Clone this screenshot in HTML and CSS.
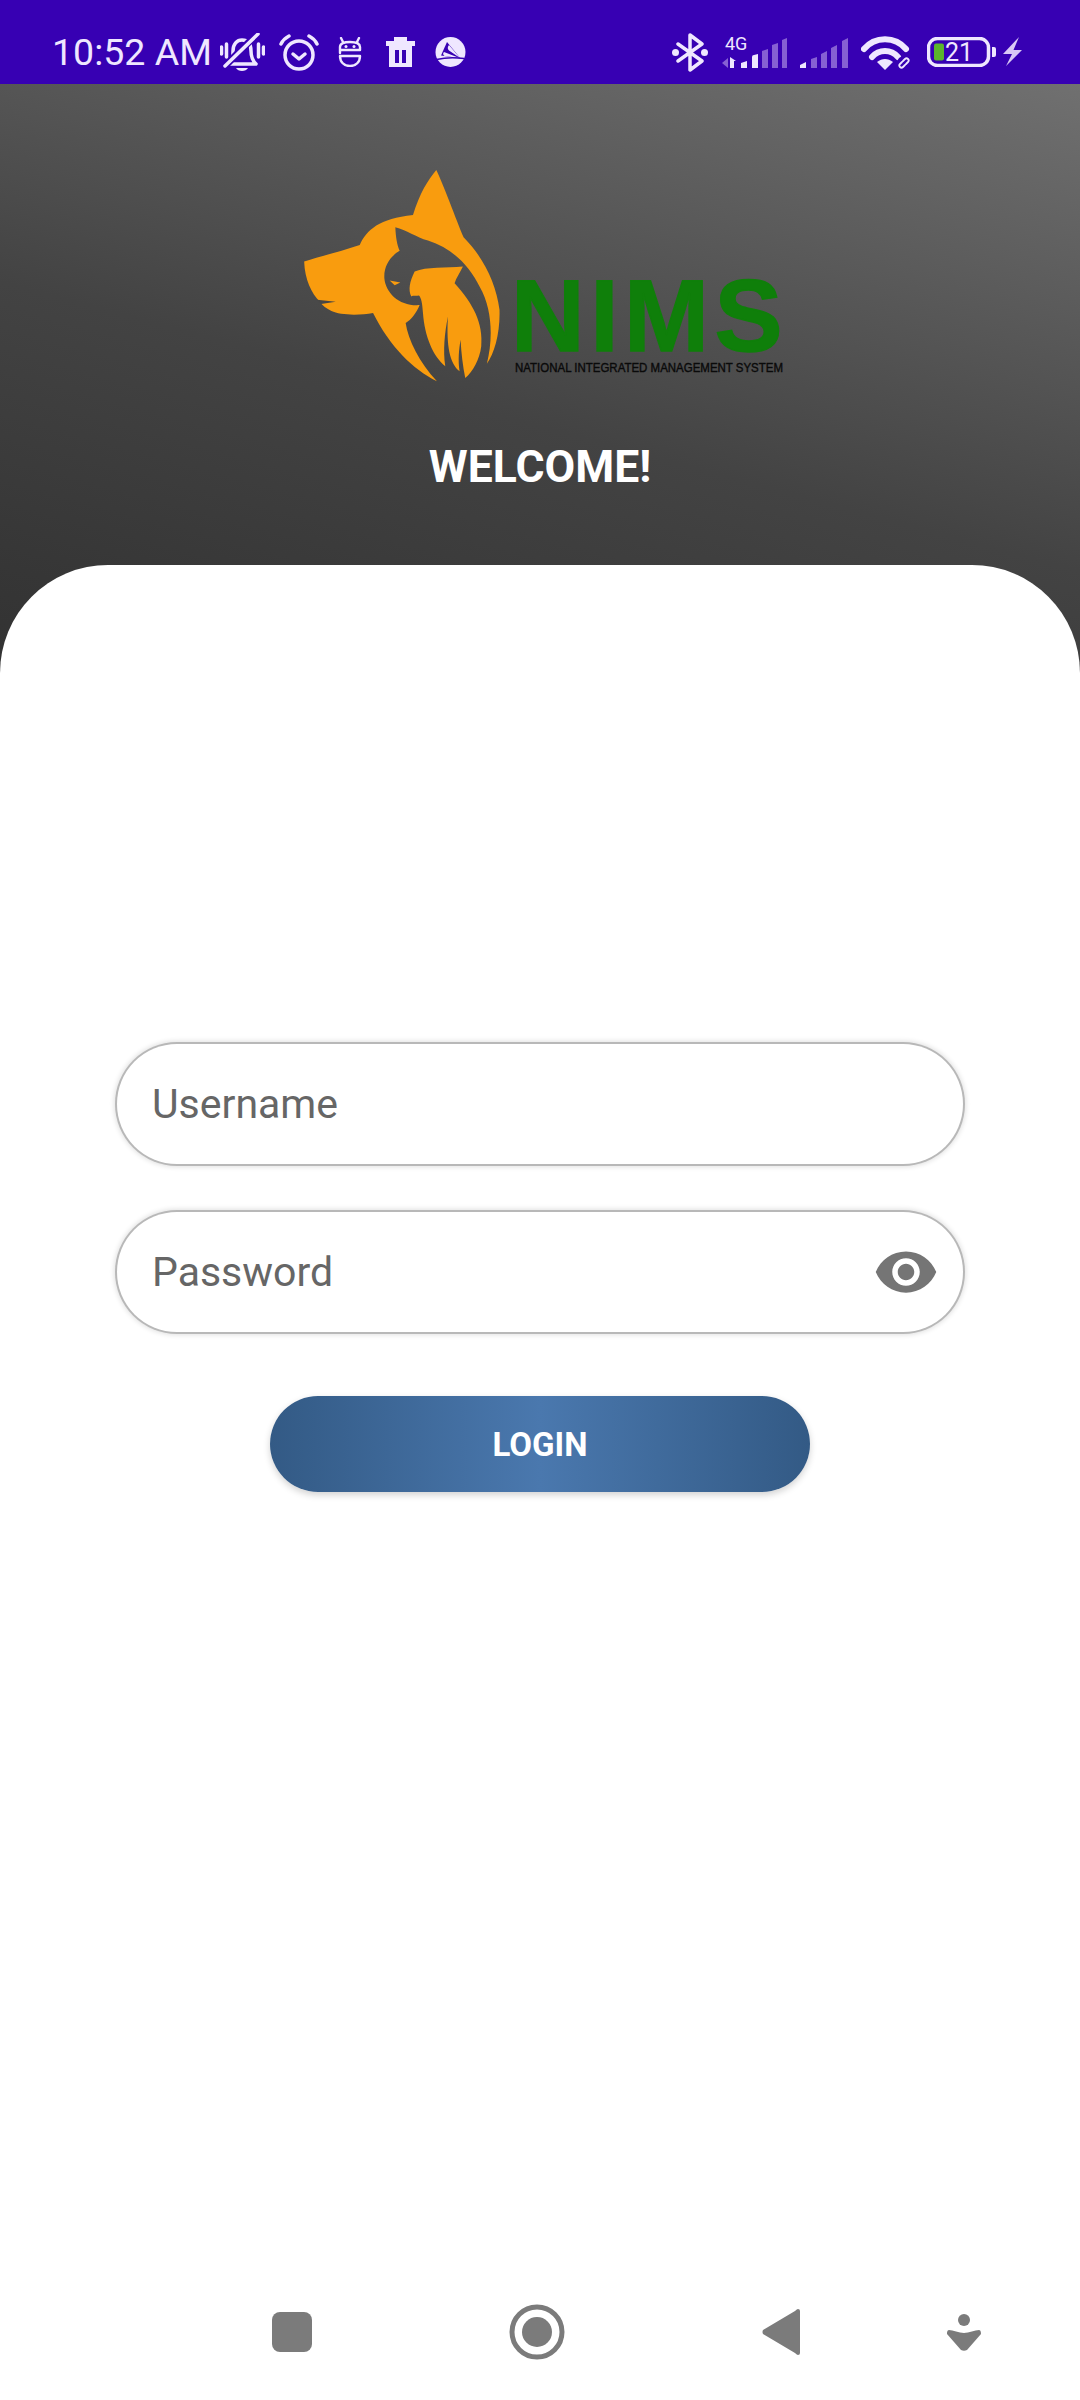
FILE: index.html
```html
<!DOCTYPE html>
<html lang="en">

<head>
    <meta charset="UTF-8" />
    <meta name="viewport" content="width=device-width, initial-scale=1.0" />
    <title>NIMS Login</title>
    <link rel="stylesheet" href="styles.css">
</head>

<body>
    <div class="statusbar">
        <div class="status-left">
            <span class="clock">10:52 AM</span>
            <svg class="ic" width="45" height="39" viewBox="0 0 45 39">
                <path class="line" d="M9 31C13 27 13 23 13 18C13 11 17 7 22 7C28 7 31 11 31 18C31 23 32 27 36 31H9Z" />
                <path class="cut" d="M6 32L37 1" />
                <path class="line" d="M5 33L38 1" />
                <path class="line" d="M1.500 14V21M43.500 14V21M6.500 11V24M38.500 11V24" />
                <path class="fill" d="M16 35H28C26 39 18 39 16 35Z" />
            </svg>
            <svg class="ic" width="40" height="37" viewBox="0 0 40 37">
                <circle class="line" cx="20" cy="21" r="14" />
                <path class="line" d="M2 10C4 6 6 4 10 2M38 10C36 6 34 4 30 2" />
                <path class="line" d="M14 20L20 25L26 20" />
            </svg>
            <svg class="ic" width="34" height="30" viewBox="0 0 34 30">
                <path class="thin" d="M7 16V10C7 6 11 5 17 5C23 5 27 6 27 10V13H7M7 19H27C27 25 23 29 17 29C11 29 7 25 7 19Z" />
                <path class="thin" d="M8 1L10 5M26 1L24 5" />
                <circle class="fill" cx="13" cy="9.500" r="1.500" />
                <circle class="fill" cx="21" cy="9.500" r="1.500" />
            </svg>
            <svg class="ic" width="39" height="30" viewBox="0 0 39 30">
                <path class="fill" fill-rule="evenodd" d="M13 0H26V4H34V9H5V4H13ZM8 9H31V30H8ZM14 13V26H18V13ZM21 13V26H25V13Z" />
            </svg>
            <svg class="ic" width="33" height="30" viewBox="0 0 33 30">
                <circle class="fill" cx="16.500" cy="15" r="15" />
                <path class="cover" d="M26.500 21.500L13 5L7 18.500Z" />
                <path class="fill" d="M15 8Q12.500 11 15 13.500L26 21ZM10 15Q8 17 10.500 19L25.500 21Z" />
                <path class="band" d="M2.500 22.500Q15 19.500 30 21.500" />
            </svg>
        </div>
        <div class="status-right">
            <svg class="ic" width="36" height="39" viewBox="0 0 36 39">
                <path class="line" d="M6 11L30 28L18 37V2L30 11L6 28" />
                <circle class="fill" cx="3.500" cy="19.500" r="3.500" />
                <circle class="fill" cx="32.500" cy="19.500" r="3.500" />
            </svg>
            <svg class="ic" width="66" height="42" viewBox="0 -4 66 42">
                <text class="net" x="4" y="15">4G</text>
                <path class="bar" d="M1 28L7 23V33Z" />
                <path class="fill" d="M9 33V22L15 26H13V33ZM20 33V28L26 26V33ZM31 33V22Q31 20 33 20L37 19V33Z" />
                <path class="bar" d="M41 33V16L47 14V33ZM51 33V10L57 8V33ZM61 33V5L66 3V33Z" />
            </svg>
            <svg class="ic" width="48" height="34" viewBox="0 0 48 34">
                <path class="fill" d="M0 33V30L6 27V33Z" />
                <path class="bar" d="M11 33V24L17 22V33ZM21 33V19L27 16V33ZM31 33V13L37 10V33ZM42 33V6L48 3V33Z" />
            </svg>
            <svg class="ic" width="53" height="35" viewBox="0 0 53 35">
                <path class="wide" d="M3 14C14 1 34 1 45 14M11 22C18 14 30 14 37 22" />
                <path class="fill" d="M24 35L16 27C21 23 27 23 32 27Z" />
                <circle class="cover" cx="43" cy="28" r="7" />
                <path class="link" d="M42 26L44 24C46 22 49 25 47 27L45 29M44 30L42 32C40 34 37 31 39 29L41 27" />
            </svg>
            <svg class="ic" width="96" height="30" viewBox="0 0 96 30">
                <rect class="line" x="1.500" y="1.500" width="60" height="27" rx="9" />
                <rect class="green" x="7" y="6.500" width="10" height="17" rx="2" />
                <text class="batt" x="18" y="24">21</text>
                <path class="fill" d="M65 10H67Q69 10 69 12V18Q69 20 67 20H65Z" />
                <path class="pale" d="M92 0L76 17H85L79 29L95 13H86.500Z" />
            </svg>
        </div>
    </div>

    <main class="screen">
        <header class="hero">
            <div class="logo">
                <svg class="mark" width="200" height="213" viewBox="70 60 600 640">
                    <path class="orange" d="M470 60C490 100 530 210 552 262C610 320 650 400 660 480C662 550 645 610 622 642C640 570 640 480 600 410C570 350 520 295 445 272C410 262 380 240 347 232C348 260 352 285 360 303C330 320 312 350 314 385C318 430 360 470 420 466C410 490 395 510 378 520C385 570 420 640 472 695C400 660 330 590 280 490C240 497 180 497 155 484C140 476 128 468 120 456C95 430 75 390 73 335C120 320 180 305 240 285C260 240 300 205 400 195C420 130 445 90 470 60Z" />
                    <path class="orange" d="M405 365C440 350 500 355 550 350C540 370 530 385 525 400C580 460 612 520 605 590C600 630 580 665 557 685C550 650 545 610 543 570C538 600 535 630 540 665C510 640 500 590 505 500C495 550 490 600 497 650C460 620 435 560 430 490C428 460 425 445 418 437C405 440 398 435 395 440C385 420 390 395 405 365Z" />
                    <path class="orange" d="M330 392L362 398L345 406Z" />
                    <path class="mouth" d="M112 450L168 456L124 463Z" />
                </svg>
                <div class="brand">
                    <span class="nims">NIMS</span>
                    <span class="nims-sub">NATIONAL INTEGRATED MANAGEMENT SYSTEM</span>
                </div>
            </div>
            <h1 class="welcome">WELCOME!</h1>
        </header>

        <section class="sheet">
            <form class="login">
                <div class="field"><span class="hint">Username</span></div>
                <div class="field">
                    <span class="hint">Password</span>
                    <svg class="eye" width="66" height="66" viewBox="0 0 24 24">
                        <path d="M12 4.500C7 4.500 2.730 7.610 1 12c1.730 4.390 6 7.500 11 7.500s9.270-3.110 11-7.500c-1.730-4.390-6-7.500-11-7.500zM12 17c-2.760 0-5-2.240-5-5s2.240-5 5-5 5 2.240 5 5-2.240 5-5 5zm0-8c-1.660 0-3 1.340-3 3s1.340 3 3 3 3-1.340 3-3-1.340-3-3-3z" />
                    </svg>
                </div>
                <button class="btn" type="button">LOGIN</button>
            </form>

            <nav class="navbar">
                <svg width="40" height="40" viewBox="0 0 40 40">
                    <rect width="40" height="40" rx="8" />
                </svg>
                <svg width="56" height="56" viewBox="0 0 56 56">
                    <circle class="ring" cx="28" cy="28" r="25" />
                    <circle cx="28" cy="28" r="15" />
                </svg>
                <svg width="38" height="46" viewBox="0 0 38 46">
                    <path d="M36 0Q38 0 38 2V44Q38 46 36 46Q35 46 33 44L1 25Q0 23 1 21L33 2Q35 0 36 0Z" />
                </svg>
                <svg class="nav-last" width="34" height="37" viewBox="0 0 34 37">
                    <ellipse cx="17" cy="6" rx="6" ry="6" />
                    <path d="M2 16C6 16 12 19 17 19C22 19 28 16 32 16C34 16 34 19 34 20L20 36C18 37 16 37 14 36L0 20C0 19 0 16 2 16Z" />
                </svg>
            </nav>
        </section>
    </main>
</body>

</html>
```

FILE: styles.css
```css
* {
    box-sizing: border-box;
}

body {
    font-family: Roboto, "Liberation Sans", sans-serif;
    margin: 0;
    padding: 0;
    width: 1080px;
    height: 2400px;
    overflow: hidden;
    background: #fff;
    display: flex;
    flex-direction: column;
}

/* status bar */
.statusbar {
    height: 84px;
    flex: none;
    background: #3700b3;
    color: #efe7ff;
    display: flex;
    justify-content: space-between;
    align-items: center;
    padding: 20px 57px 0 52px;
}

.status-left,
.status-right {
    display: flex;
    align-items: center;
    gap: 14px;
}

.status-right {
    gap: 13px;
}

.clock {
    font-size: 37.5px;
    width: 154px;
    white-space: nowrap;
}

.ic {
    display: block;
    flex: none;
}

.line,
.thin,
.wide,
.band,
.link {
    fill: none;
    stroke: #efe7ff;
    stroke-width: 3.5;
    stroke-linecap: round;
    stroke-linejoin: round;
}

.thin {
    stroke-width: 2.4;
}

.wide {
    stroke-width: 6;
}

.link {
    stroke-width: 1.8;
}

.band {
    stroke: #3700b3;
    stroke-width: 1.5;
}

.cut {
    fill: none;
    stroke: #3700b3;
    stroke-width: 7;
}

.fill {
    fill: #efe7ff;
}

.bar {
    fill: #8660d3;
}

.pale {
    fill: #d9c9f6;
}

.green {
    fill: #5bb52c;
}

.cover {
    fill: #3700b3;
}

.net {
    fill: #efe7ff;
    font-size: 18px;
}

.batt {
    fill: #efe7ff;
    font-size: 25px;
}

/* main area */
.screen {
    flex: 1;
    display: flex;
    flex-direction: column;
    background: linear-gradient(195deg, #707070 0%, #434343 55%, #363636 87%, #323232 100%) no-repeat;
    background-size: 100% 596px;
}

.hero {
    height: 481px;
    flex: none;
    padding-top: 86px;
    display: flex;
    flex-direction: column;
    align-items: center;
}

.logo {
    display: flex;
    align-items: flex-end;
    gap: 12px;
    margin-left: 6px;
}

.mark {
    display: block;
    flex: none;
}

.orange {
    fill: #f99c0e;
}

.mouth {
    fill: #464646;
}

.brand {
    width: 268px;
    padding-bottom: 8px;
    display: flex;
    flex-direction: column;
}

.nims {
    margin-left: -4px;
    color: #0f7f0a;
    -webkit-text-stroke: 1.5px #0f7f0a;
    font-family: "Liberation Sans", sans-serif;
    font-weight: 700;
    font-size: 102px;
    line-height: 73px;
    letter-spacing: 5.5px;
    white-space: nowrap;
}

.nims-sub {
    margin-top: 8px;
    color: #0a0a0a;
    -webkit-text-stroke: 0.4px #0a0a0a;
    font-family: "Liberation Sans", sans-serif;
    font-size: 13.5px;
    line-height: 14px;
    white-space: nowrap;
    transform: scaleX(0.85);
    transform-origin: left center;
}

.welcome {
    margin: 59px 0 0;
    color: #fff;
    font-size: 44.5px;
    font-weight: 700;
    line-height: 50px;
}

.sheet {
    flex: 1;
    background: #fff;
    border-radius: 108px 108px 0 0;
    display: flex;
    flex-direction: column;
}

/* login form */
.login {
    padding: 479px 117px 0;
    display: flex;
    flex-direction: column;
    align-items: center;
}

.field {
    width: 100%;
    height: 120px;
    margin-bottom: 48px;
    border-radius: 60px;
    background: #fff;
    box-shadow: 0 0 0 2px #b8b8b8, 0 0 5px 3px rgba(0, 0, 0, 0.12);
    padding: 0 24px 0 35px;
    display: flex;
    align-items: center;
    justify-content: space-between;
}

.hint {
    font-size: 41px;
    color: #666;
}

.eye {
    fill: #757575;
}

.btn {
    width: 540px;
    height: 96px;
    margin-top: 16px;
    border: none;
    border-radius: 48px;
    color: #fff;
    font-family: Roboto, sans-serif;
    font-size: 33px;
    font-weight: 700;
    background: linear-gradient(90deg, #335a85 0%, #4a78ae 50%, #335a85 100%);
    box-shadow: 0 3px 7px rgba(0, 0, 0, 0.18);
}

/* bottom nav */
.navbar {
    margin-top: auto;
    height: 136px;
    padding-left: 272px;
    display: flex;
    align-items: center;
    gap: 197px;
    fill: #7b7b7b;
}

.navbar svg {
    display: block;
    flex: none;
}

.ring {
    fill: none;
    stroke: #7b7b7b;
    stroke-width: 5;
}

.nav-last {
    margin-left: -50px;
}
```
